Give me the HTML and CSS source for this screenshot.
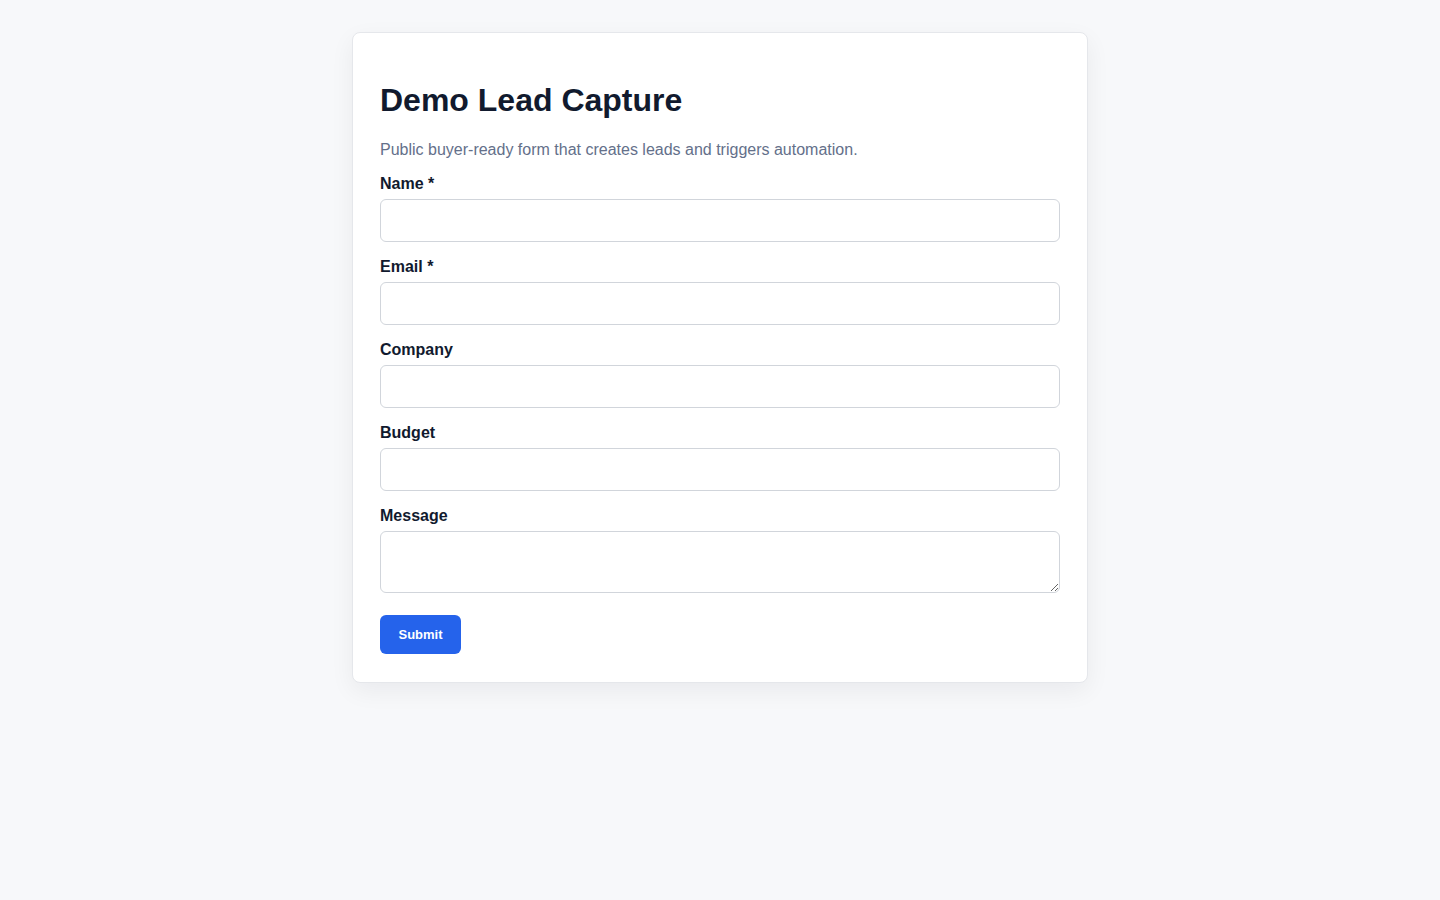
FILE: index.html
```html
<!DOCTYPE html>
<html lang="en">
<head>
<meta charset="utf-8">
<title>Demo Lead Capture</title>
<link rel="stylesheet" href="styles.css">
</head>
<body>
<main class="card">
  <h1 class="title">Demo Lead Capture</h1>
  <p class="subtitle">Public buyer-ready form that creates leads and triggers automation.</p>
  <form class="form">
    <div class="field">
      <label class="label" for="name">Name *</label>
      <input class="input" id="name" type="text">
    </div>
    <div class="field">
      <label class="label" for="email">Email *</label>
      <input class="input" id="email" type="email">
    </div>
    <div class="field">
      <label class="label" for="company">Company</label>
      <input class="input" id="company" type="text">
    </div>
    <div class="field">
      <label class="label" for="budget">Budget</label>
      <input class="input" id="budget" type="text">
    </div>
    <div class="field field-last">
      <label class="label" for="message">Message</label>
      <textarea class="input textarea" id="message"></textarea>
    </div>
    <button class="submit" type="button">Submit</button>
  </form>
</main>
</body>
</html>
```

FILE: styles.css
```css
* { box-sizing: border-box; }
html, body { margin: 0; padding: 0; }
body {
  background: #f7f8fa;
  font-family: "Liberation Sans", Arial, sans-serif;
  color: #111827;
  padding: 32px 0 40px;
}
.card {
  width: 736px;
  margin: 0 auto;
  background: #ffffff;
  border: 1px solid #e5e7eb;
  border-radius: 8px;
  box-shadow: 0 8px 24px rgba(15, 23, 42, 0.06);
  padding: 28px 27px 28px;
}
.title {
  font-size: 32px;
  font-weight: 700;
  line-height: 37px;
  margin: 21px 0 22px;
  color: #111a2e;
}
.subtitle {
  font-size: 16px;
  line-height: 18px;
  margin: 0 0 16px;
  color: #64708a;
}
.form { display: flex; flex-direction: column; }
.field { display: flex; flex-direction: column; margin-bottom: 16px; }
.label {
  font-size: 16px;
  font-weight: 700;
  line-height: 18px;
  margin-bottom: 6px;
  color: #111a2e;
}
.input {
  display: block;
  width: 100%;
  height: 43px;
  border: 1px solid #d1d5db;
  border-radius: 6px;
  background: #fff;
  font-family: inherit;
  font-size: 16px;
  padding: 10px 12px;
}
.textarea {
  height: 62px;
  resize: vertical;
}
.field-last { margin-bottom: 22px; }
.submit {
  align-self: flex-start;
  width: 81px;
  height: 39px;
  border: none;
  border-radius: 6px;
  background: #2563eb;
  color: #fff;
  font-family: inherit;
  font-size: 13px;
  font-weight: 700;
  cursor: pointer;
}
```
